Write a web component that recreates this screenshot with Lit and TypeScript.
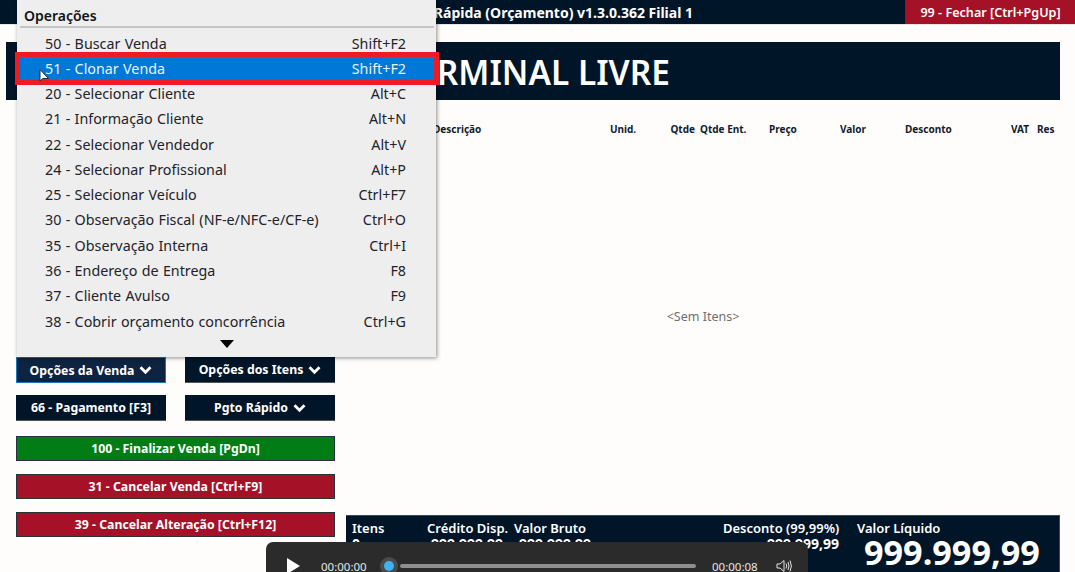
import { LitElement, html, css, svg } from "lit";
import { customElement } from "lit/decorators.js";

const ITEMS: [string, string][] = [
  ["50 - Buscar Venda", "Shift+F2"],
  ["51 - Clonar Venda", "Shift+F2"],
  ["20 - Selecionar Cliente", "Alt+C"],
  ["21 - Informação Cliente", "Alt+N"],
  ["22 - Selecionar Vendedor", "Alt+V"],
  ["24 - Selecionar Profissional", "Alt+P"],
  ["25 - Selecionar Veículo", "Ctrl+F7"],
  ["30 - Observação Fiscal (NF-e/NFC-e/CF-e)", "Ctrl+O"],
  ["35 - Observação Interna", "Ctrl+I"],
  ["36 - Endereço de Entrega", "F8"],
  ["37 - Cliente Avulso", "F9"],
  ["38 - Cobrir orçamento concorrência", "Ctrl+G"],
];

const chevron = svg`<svg class="chev" width="13" height="10" viewBox="0 0 13 10"><path d="M1.5 2.2 6.5 7.2 11.5 2.2" fill="none" stroke="#fff" stroke-width="2.8"/></svg>`;

@customElement("app-root")
export class AppRoot extends LitElement {
  static styles = css`
    :host { display: block; width: 1075px; height: 572px; position: relative; overflow: hidden; background: #fffdfc; font-family: "Noto Sans", "Open Sans", sans-serif; color: #fff; }
    .top { height: 25px; background: #011528; display: flex; align-items: center; box-sizing: border-box; border-bottom: 1px solid #e6e6e6; }
    .appname { width: 693px; text-align: right; font-size: 14px; font-weight: 700; white-space: nowrap; flex: none; }
    .spacer { flex: 1; }
    .close { width: 170px; height: 24px; background: #a51127; display: flex; align-items: center; justify-content: center; font-size: 12.6px; font-weight: 600; border-left: 1px solid #7d1a2a; box-sizing: border-box; }
    .banner { margin: 17px 15px 0 6px; height: 58px; box-sizing: border-box; padding: 2px 390px 0 0; background: #011528; display: flex; align-items: center; justify-content: flex-end; font-size: 33.5px; font-weight: 600; white-space: nowrap; }
    .main { display: flex; height: 472px; }
    .left { width: 319px; margin-left: 16px; flex: none; display: flex; flex-direction: column; padding-top: 257px; box-sizing: border-box; }
    .row { display: flex; justify-content: space-between; margin-bottom: 12px; }
    .row.last { margin-bottom: 15px; }
    .btn { height: 26px; background: #011528; display: flex; align-items: center; justify-content: center; gap: 5px; font-size: 12.3px; font-weight: 700; box-sizing: border-box; border-bottom: 1px solid #555; white-space: nowrap; }
    .half { width: 150px; }
    .focus { border: 1px solid #1b76b8; background: #0d2340; }
    .wide { width: 319px; height: 25px; margin-bottom: 13px; border: 1px solid #26323c; }
    .green { background: #027c14; }
    .red { background: #a51127; }
    .right { width: 714px; margin-left: 11px; flex: none; display: flex; flex-direction: column; position: relative; }
    .thead { display: grid; grid-template-columns: 177px 50px 40px 69px 71px 65px 106px 26px 23px; padding: 22px 0 0 87px; height: 30px; box-sizing: border-box; color: #10202e; font-size: 10px; font-weight: 700; white-space: nowrap; }
    .thead .r { text-align: right; padding-right: 5px; }
    .empty { flex: 1; display: flex; align-items: center; justify-content: center; color: #6f6f6f; font-size: 12.5px; padding-bottom: 12px; }
    .foot { height: 57px; background: #011528; flex: none; display: grid; grid-template-columns: 75px 87px 209px 134px 1fr; padding: 5px 0 0 6px; box-sizing: border-box; font-size: 13px; font-weight: 600; border-top: 1px solid #3a4a58; border-right: 1px solid #3a4a58; }
    .cell { display: flex; flex-direction: column; line-height: 15px; white-space: nowrap; min-width: 0; }
    .cell .val { font-size: 14px; font-weight: 700; }
    .cell .v2 { padding-left: 4px; }
    .cell .v3 { padding-left: 5px; }
    .cell .v4 { text-align: right; padding-right: 18px; }
    .big { font-size: 34.2px; font-weight: 700; line-height: 38px; margin: -3px 0 0 7px; }
    .menu { position: absolute; left: 17px; top: 0; width: 419px; height: 357px; background: #eeeeee; color: #22222c; box-shadow: 1px 1px 4px rgba(0,0,0,.45); box-sizing: border-box; padding: 0 2px 0 3px; }
    .mhead { height: 28px; padding: 7px 0 0 4px; box-sizing: border-box; font-size: 14px; font-weight: 600; line-height: 18px; border-bottom: 2px solid #c4c4c4; color: #12121a; }
    .items { padding-top: 2.5px; }
    .item { height: 25.28px; display: flex; justify-content: space-between; align-items: center; padding: 0 28px 0 25px; font-size: 14.3px; word-spacing: .6px; white-space: nowrap; }
    .item.sel { background: #0078d7; color: #e9f2fb; outline: 5px solid #ed1c24; height: 23px; margin: 1.5px 0 .78px; }
    .more { display: flex; justify-content: center; padding-top: 6px; }
    .cursor { position: absolute; left: 39px; top: 69px; }
    .player { position: absolute; left: 266px; top: 542px; width: 542px; height: 30px; background: #2b2b2b; border-radius: 7px 7px 0 0; overflow: hidden; font-size: 11.5px; color: #e6e6e6; }
    .ctl { height: 48px; display: flex; align-items: center; }
    .play { margin-left: 21px; flex: none; display: block; }
    .time { margin-left: 21px; flex: none; width: 48px; }
    .thumb { width: 18px; height: 18px; margin-left: 11px; border-radius: 50%; background: #4a4a4a; display: flex; align-items: center; justify-content: center; flex: none; }
    .thumb i { width: 10px; height: 10px; border-radius: 50%; background: #3fb1f5; display: block; }
    .track { width: 296px; height: 4px; background: #8f8f8f; border-radius: 2px; margin-left: 2px; flex: none; }
    .t2 { margin-left: 16px; }
    .vol { margin-left: 16px; flex: none; display: block; }
  `;

  render() {
    return html`
      <div class="top">
        <div class="appname">PDV - Venda Rápida (Orçamento) v1.3.0.362 Filial 1</div>
        <div class="spacer"></div>
        <div class="close">99 - Fechar [Ctrl+PgUp]</div>
      </div>
      <div class="banner">TERMINAL LIVRE</div>
      <div class="main">
        <div class="left">
          <div class="row">
            <div class="btn half focus">Opções da Venda ${chevron}</div>
            <div class="btn half">Opções dos Itens ${chevron}</div>
          </div>
          <div class="row last">
            <div class="btn half">66 - Pagamento [F3]</div>
            <div class="btn half">Pgto Rápido ${chevron}</div>
          </div>
          <div class="btn wide green">100 - Finalizar Venda [PgDn]</div>
          <div class="btn wide red">31 - Cancelar Venda [Ctrl+F9]</div>
          <div class="btn wide red">39 - Cancelar Alteração [Ctrl+F12]</div>
        </div>
        <div class="right">
          <div class="thead">
            <span>Descrição</span><span>Unid.</span><span class="r">Qtde</span><span>Qtde Ent.</span><span>Preço</span><span>Valor</span><span>Desconto</span><span>VAT</span><span>Res</span>
          </div>
          <div class="empty"><span>&lt;Sem Itens&gt;</span></div>
          <div class="foot">
            <div class="cell"><span>Itens</span><span class="val">0</span></div>
            <div class="cell"><span>Crédito Disp.</span><span class="val v2">999.999,99</span></div>
            <div class="cell"><span>Valor Bruto</span><span class="val v3">999.999,99</span></div>
            <div class="cell"><span>Desconto (99,99%)</span><span class="val v4">999.999,99</span></div>
            <div class="cell"><span>Valor Líquido</span><span class="big">999.999,99</span></div>
          </div>
        </div>
      </div>

      <div class="menu">
        <div class="mhead">Operações</div>
        <div class="items">
          ${ITEMS.map(([a, b]) => html`<div class="item ${a.startsWith("51") ? "sel" : ""}"><span>${a}</span><span>${b}</span></div>`)}
        </div>
        <div class="more"><svg width="14" height="8" viewBox="0 0 14 8"><path d="M0 0H14L7 8Z" fill="#000"/></svg></div>
      </div>

      <svg class="cursor" width="12" height="14" viewBox="0 0 12 14"><path d="M1 .5V12L4 9.5H9.5Z" fill="#fff" stroke="#2a2a35" stroke-width="1"/></svg>

      <div class="player"><div class="ctl">
        <svg class="play" width="13" height="16" viewBox="0 0 13 16"><path d="M0 0L13 8L0 16Z" fill="#fff"/></svg>
        <span class="time">00:00:00</span>
        <div class="thumb"><i></i></div>
        <div class="track"></div>
        <span class="time t2">00:00:08</span>
        <svg class="vol" width="17" height="14" viewBox="0 0 17 14" fill="none" stroke="#e6e6e6" stroke-width="1"><path d="M1 5H4L8 1.5V12.5L4 9H1Z"/><path d="M10 4.5Q11.5 7 10 9.5M12 3Q14 7 12 11M14 1.5Q16.8 7 14 12.5"/></svg>
      </div></div>
    `;
  }
}
